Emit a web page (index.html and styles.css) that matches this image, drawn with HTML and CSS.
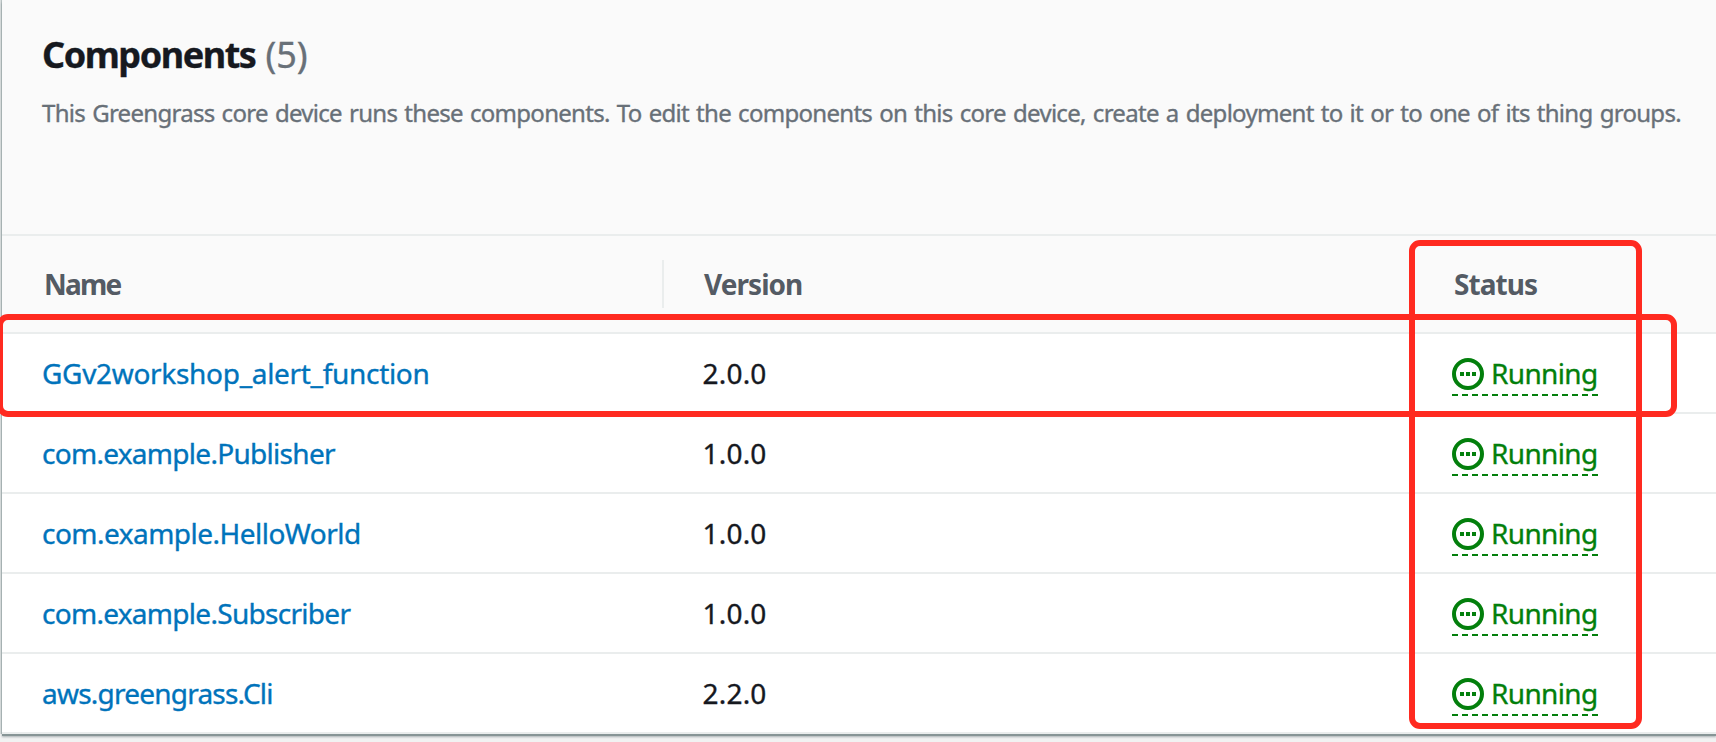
FILE: index.html
```html
<!DOCTYPE html>
<html lang="en">
<head>
<meta charset="utf-8">
<title>Components</title>
<link rel="stylesheet" href="styles.css">
</head>
<body>
<svg class="sprite" aria-hidden="true">
  <symbol id="running" viewBox="0 0 32 32">
    <circle cx="16" cy="16" r="14" fill="none" stroke="currentColor" stroke-width="4"/>
    <path d="M8 14h4v4H8zM14 14h4v4h-4zM20 14h4v4h-4z" fill="currentColor"/>
  </symbol>
</svg>
<main class="card">
  <header class="card-header">
    <h2 class="title"><span class="title-text">Components</span> <span class="count">(5)</span></h2>
    <p class="description">This Greengrass core device runs these components. To edit the components on this core device, create a deployment to it or to one of its thing groups.</p>
  </header>
  <div class="table">
    <div class="row head">
      <div class="cell name">Name</div>
      <div class="cell version">Version</div>
      <div class="cell status-col">Status</div>
    </div>
    <div class="row">
      <div class="cell"><a class="link link-function">GGv2workshop_alert_function</a></div>
      <div class="cell number">2.0.0</div>
      <div class="cell"><span class="status"><svg class="icon"><use href="#running"/></svg><span class="status-text">Running</span></span></div>
    </div>
    <div class="row">
      <div class="cell"><a class="link">com.example.Publisher</a></div>
      <div class="cell number">1.0.0</div>
      <div class="cell"><span class="status"><svg class="icon"><use href="#running"/></svg><span class="status-text">Running</span></span></div>
    </div>
    <div class="row">
      <div class="cell"><a class="link link-hello">com.example.HelloWorld</a></div>
      <div class="cell number">1.0.0</div>
      <div class="cell"><span class="status"><svg class="icon"><use href="#running"/></svg><span class="status-text">Running</span></span></div>
    </div>
    <div class="row">
      <div class="cell"><a class="link">com.example.Subscriber</a></div>
      <div class="cell number">1.0.0</div>
      <div class="cell"><span class="status"><svg class="icon"><use href="#running"/></svg><span class="status-text">Running</span></span></div>
    </div>
    <div class="row">
      <div class="cell"><a class="link link-cli">aws.greengrass.Cli</a></div>
      <div class="cell number">2.2.0</div>
      <div class="cell"><span class="status"><svg class="icon"><use href="#running"/></svg><span class="status-text">Running</span></span></div>
    </div>
  </div>
</main>
<div class="mark mark-row"></div>
<div class="mark mark-column"></div>
</body>
</html>
```

FILE: styles.css
```css
* { box-sizing: border-box; }

body {
  position: relative;
  height: 742px;
  margin: 0;
  padding-left: 2px;
  overflow: hidden;
  background: #f1f2f2;
  color: #16191f;
  font-family: "Noto Sans", "Open Sans", sans-serif;
  font-size: 28px;
  -webkit-text-stroke: .35px currentColor;
}

.sprite { display: none; }

.card {
  height: 734px;
  background: #fff;
  box-shadow: 0 2px 0 #879596, 0 3px 2px rgba(0, 28, 36, .3), -1px 0 0 #b8c2c2, -2px 0 0 #d9dede;
}

.card-header {
  height: 236px;
  padding: 31px 0 0 40px;
  background: #fafafa;
  border-bottom: 2px solid #eaeded;
}

.title {
  display: flex;
  gap: 10px;
  margin: 0;
  font-size: 36px;
  line-height: 48px;
}

.title-text { letter-spacing: -1.45px; }

.count {
  color: #687078;
  font-weight: 400;
}

.description {
  margin: 17px 0 0;
  color: #687078;
  font-size: 24px;
  line-height: 34px;
  letter-spacing: -.71px;
  word-spacing: 1.58px;
  white-space: nowrap;
}

.row {
  display: grid;
  grid-template-columns: 662px 748px 1fr;
  align-items: center;
  height: 80px;
  border-bottom: 2px solid #eaeded;
}

.head {
  height: 98px;
  background: #fafafa;
  color: #545b64;
  font-weight: 700;
  -webkit-text-stroke-width: 0;
}

.cell {
  padding-left: 40px;
  line-height: 48px;
  white-space: nowrap;
}

.head .cell { line-height: 48px; }

.head .name {
  padding-left: 42px;
  border-right: 2px solid #eaeded;
  letter-spacing: -1.8px;
}

.head .version {
  padding-left: 40px;
  letter-spacing: -.95px;
}

.head .status-col {
  padding-left: 42px;
  letter-spacing: -.93px;
}

.cell.number { padding-left: 38.5px; }

.link {
  color: #0073bb;
  letter-spacing: -.71px;
}

.link-function { letter-spacing: -.31px; }
.link-hello { letter-spacing: -.52px; }
.link-cli { letter-spacing: -.78px; }
.number { letter-spacing: .2px; }

.status {
  display: flex;
  align-items: center;
  width: 146px;
  height: 38px;
  margin-top: 6px;
  padding-bottom: 6px;
  color: #037f0c;
  background: repeating-linear-gradient(90deg, currentColor 0 6px, transparent 6px 10px) left bottom / 100% 2px no-repeat;
}

.row .status { margin: 8px 0 0; }

.icon {
  flex: none;
  width: 32px;
  height: 32px;
  margin-right: 7px;
}

.status-text {
  margin-top: -2px;
  line-height: 32px;
  letter-spacing: -.65px;
}

/* Highlight frames drawn over the table */
.mark {
  position: absolute;
  border: 6px solid #ff2a20;
  border-radius: 11px;
}

.mark-row {
  top: 314px;
  left: -3px;
  width: 1680px;
  height: 103px;
}

.mark-column {
  top: 240px;
  left: 1409px;
  width: 233px;
  height: 489px;
}
```
